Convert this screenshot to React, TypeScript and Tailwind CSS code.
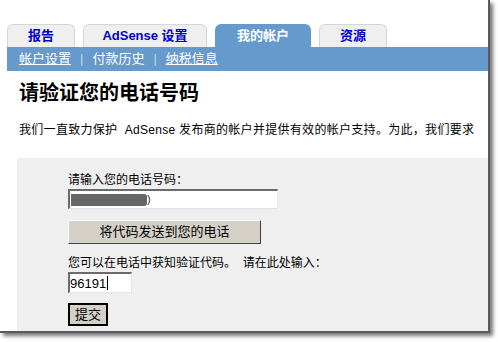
export default function App() {
  const font = { fontFamily: '"Liberation Sans", "Noto Sans CJK SC", sans-serif' };
  return (
    <div className="w-[498px] h-[342px] bg-white overflow-hidden" style={font}>
      {/* 화면 영역 (오른쪽/아래 그림자) */}
      <div className="w-[490px] h-[333px] bg-white border-r-2 border-b-2 border-[#5a5a58] shadow-[3px_3px_4px_rgba(0,0,0,0.55)] overflow-hidden flex flex-col">
        {/* 탭 */}
        <div className="flex items-end gap-2 pl-[7px] pt-[24px] h-[47px]">
          <Tab label="报告" w="w-[68px]" />
          <Tab label="AdSense 设置" w="w-[124px]" />
          <div className="w-[96px] h-[23px] rounded-t-[6px] bg-[#6699cc] flex items-center justify-center text-[13px] font-bold text-white">
            我的帐户
          </div>
          <Tab label="资源" w="w-[68px]" />
        </div>

        {/* 하위 메뉴 */}
        <div className="ml-[7px] h-[24px] bg-[#6699cc] flex items-center pl-[12px] text-[13px] text-white">
          <a className="underline">帐户设置</a>
          <span className="mx-[9px] text-[#c5d8ec]">|</span>
          <span>付款历史</span>
          <span className="mx-[9px] text-[#c5d8ec]">|</span>
          <a className="underline">纳税信息</a>
        </div>

        <h1 className="mt-[10px] ml-[19px] text-[20px] leading-[24px] font-bold text-black">
          请验证您的电话号码
        </h1>

        <p className="mt-[17px] ml-[19px] text-[12px] leading-[16px] text-black whitespace-nowrap tracking-[0.3px]">
          我们一直致力保护&nbsp; AdSense 发布商的帐户并提供有效的帐户支持。为此，我们要求
        </p>

        {/* 입력 영역 */}
        <div className="mt-[20px] ml-[17px] flex-1 bg-[#efefef] pl-[51px] pt-[14px] text-[12px] text-black">
          <div className="leading-[16px]">请输入您的电话号码：</div>
          <div className="mt-[1px] w-[210px] h-[20px] bg-white border-t-2 border-l-2 border-[#6b6b6b] border-r border-b border-r-[#e4e4e4] border-b-[#e4e4e4] flex items-center pl-[1px]">
            <div className="w-[76px] h-[12px] bg-[#666666] rounded-r-[3px]" />
            <span className="text-[11px] leading-none text-[#333]">)</span>
          </div>
          <button className="mt-[11px] w-[193px] h-[24px] bg-[#d4d0c8] border border-t-white border-l-white border-r-[#404040] border-b-[#404040] text-[13px] text-black">
            将代码发送到您的电话
          </button>
          <div className="mt-[11px] leading-[16px]">您可以在电话中获知验证代码。&nbsp; 请在此处输入：</div>
          <div className="mt-[1px] w-[64px] h-[21px] bg-white border-t-2 border-l-2 border-[#6b6b6b] border-r border-b border-r-[#e4e4e4] border-b-[#e4e4e4] flex items-center text-[13px] leading-none">
            96191<span className="w-px h-[14px] bg-black ml-px" />
          </div>
          <button className="mt-[10px] w-[40px] h-[23px] bg-[#d4d0c8] border-2 border-black text-[13px] text-black leading-none">
            提交
          </button>
        </div>
      </div>
    </div>
  );
}

function Tab({ label, w }: { label: string; w: string }) {
  return (
    <div
      className={`${w} h-[23px] rounded-t-[6px] bg-[#efefef] border border-b-0 border-[#d6d6d6] flex items-center justify-center text-[13px] font-bold text-[#0000cc]`}
    >
      {label}
    </div>
  );
}
